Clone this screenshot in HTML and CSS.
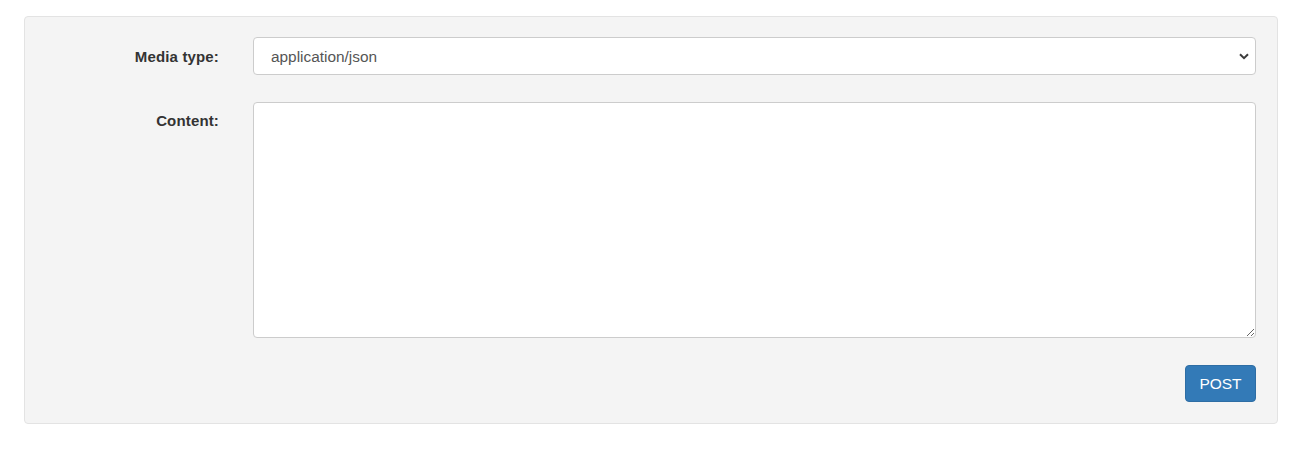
FILE: index.html
```html
<!DOCTYPE html>
<html>
<head>
<meta charset="utf-8">
<link rel="stylesheet" href="styles.css">
</head>
<body>
<div class="page">
  <form class="well">
    <div class="row">
      <label class="label" for="mt">Media type:</label>
      <div class="control select-wrap">
        <select id="mt" class="select">
          <option>application/json</option>
        </select>
        <svg class="chev" width="10" height="7" viewBox="0 0 10 7"><path d="M1 1.2 L5 5.2 L9 1.2" fill="none" stroke="#3c3c3c" stroke-width="2"/></svg>
      </div>
    </div>
    <div class="row row-content">
      <label class="label" for="ct">Content:</label>
      <div class="control">
        <textarea id="ct" class="textarea"></textarea>
      </div>
    </div>
    <div class="actions">
      <button type="button" class="btn">POST</button>
    </div>
  </form>
</div>
</body>
</html>
```
FILE: styles.css
```css
html, body {
  margin: 0;
  padding: 0;
  background: #fff;
}
body {
  font-family: "Liberation Sans", Arial, sans-serif;
  font-size: 15px;
  color: #333;
}
.page {
  padding: 16px 31px 0 24px;
}
.well {
  box-sizing: border-box;
  height: 408px;
  background: #f4f4f4;
  border: 1px solid #e3e3e3;
  border-radius: 4px;
  padding: 20px 21px 0 19px;
  display: flex;
  flex-direction: column;
}
.row {
  display: grid;
  grid-template-columns: 175px 1fr;
  column-gap: 34px;
}
.row-content {
  margin-top: 27px;
}
.label {
  font-weight: bold;
  text-align: right;
  line-height: 20px;
  padding-top: 10px;
  letter-spacing: 0.15px;
}
.row-content .label {
  padding-top: 9px;
}
.control {
  min-width: 0;
}
.select-wrap {
  position: relative;
}
.select {
  box-sizing: border-box;
  display: block;
  width: 100%;
  height: 38px;
  -webkit-appearance: none;
  appearance: none;
  background: #fff;
  border: 1px solid #ccc;
  border-radius: 4px;
  padding: 1px 30px 0 17px;
  font-family: "Liberation Sans", Arial, sans-serif;
  font-size: 15.4px;
  color: #555;
  outline: none;
}
.chev {
  position: absolute;
  right: 7px;
  top: 16px;
  pointer-events: none;
}
.textarea {
  box-sizing: border-box;
  display: block;
  width: 100%;
  height: 236px;
  background: #fff;
  border: 1px solid #ccc;
  border-radius: 4px;
  padding: 6px 12px;
  font-family: "Liberation Sans", Arial, sans-serif;
  font-size: 15px;
  color: #555;
  outline: none;
  resize: vertical;
}
.actions {
  display: flex;
  justify-content: flex-end;
  margin-top: 27px;
}
.btn {
  box-sizing: border-box;
  height: 37px;
  width: 71px;
  background: #337ab7;
  border: 1px solid #2e6da4;
  border-radius: 4px;
  color: #fff;
  font-family: "Liberation Sans", Arial, sans-serif;
  font-size: 15.5px;
  padding: 0;
  cursor: pointer;
}
```
